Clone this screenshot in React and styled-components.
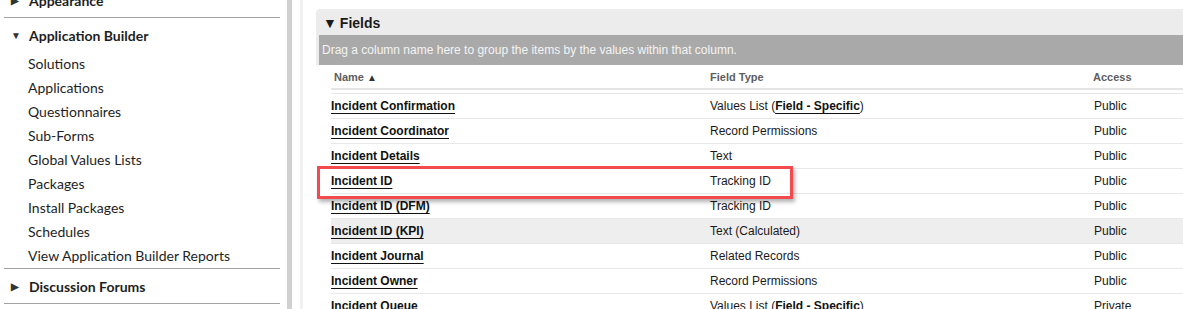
import React from "react";
import styled, { createGlobalStyle } from "styled-components";

const GlobalStyle = createGlobalStyle`
  html, body {
    margin: 0;
    padding: 0;
    background: #fff;
    overflow: hidden;
  }
  body {
    font-family: "Liberation Sans", Arial, sans-serif;
  }
`;

const menuItems = [
  "Solutions",
  "Applications",
  "Questionnaires",
  "Sub-Forms",
  "Global Values Lists",
  "Packages",
  "Install Packages",
  "Schedules",
  "View Application Builder Reports",
];

const rows = [
  { name: "Incident Confirmation", type: "Values List", typeLink: "Field - Specific", access: "Public" },
  { name: "Incident Coordinator", type: "Record Permissions", access: "Public" },
  { name: "Incident Details", type: "Text", access: "Public" },
  { name: "Incident ID", type: "Tracking ID", access: "Public", marked: true },
  { name: "Incident ID (DFM)", type: "Tracking ID", access: "Public" },
  { name: "Incident ID (KPI)", type: "Text (Calculated)", access: "Public", hover: true },
  { name: "Incident Journal", type: "Related Records", access: "Public" },
  { name: "Incident Owner", type: "Record Permissions", access: "Public" },
  { name: "Incident Queue", type: "Values List", typeLink: "Field - Specific", access: "Private" },
];

const App = () => {
  return (
    <>
      <GlobalStyle />
      <Page>
        <Sidebar>
          <Section>
            <SectionHead>
              <Caret>▶</Caret>Appearance
            </SectionHead>
          </Section>
          <Section>
            <SectionHead>
              <Caret>▼</Caret>Application Builder
            </SectionHead>
            <MenuList>
              {menuItems.map((item) => (
                <MenuItem key={item}>{item}</MenuItem>
              ))}
            </MenuList>
          </Section>
          <Section>
            <SectionHead>
              <Caret>▶</Caret>Discussion Forums
            </SectionHead>
          </Section>
        </Sidebar>
        <Splitter />
        <Main>
          <Panel>
            <PanelHead>
              <PanelCaret>▼</PanelCaret>Fields
            </PanelHead>
            <PanelBody>
              <GroupBar>
                Drag a column name here to group the items by the values within that column.
              </GroupBar>
              <Table>
                <HeadRow>
                  <HeadCell $pad>
                    Name <SortArrow>▲</SortArrow>
                  </HeadCell>
                  <HeadCell>Field Type</HeadCell>
                  <HeadCell>Access</HeadCell>
                </HeadRow>
                <Body>
                  {rows.map((r) => (
                    <Row key={r.name} $hover={r.hover}>
                      <Cell>
                        <NameLink>{r.name}</NameLink>
                      </Cell>
                      <Cell>
                        {r.type}
                        {r.typeLink && (
                          <>
                            {" ("}
                            <TypeLink>{r.typeLink}</TypeLink>)
                          </>
                        )}
                      </Cell>
                      <Cell $access>{r.access}</Cell>
                      {r.marked && <Marker />}
                    </Row>
                  ))}
                </Body>
              </Table>
            </PanelBody>
          </Panel>
        </Main>
      </Page>
    </>
  );
};

export default App;

const Page = styled.div`
  display: flex;
  width: 1183px;
  height: 309px;
  overflow: hidden;
`;

const Sidebar = styled.nav`
  width: 276px;
  margin: -17px 7px 0 4px;
  font-family: Lato, "Noto Sans", sans-serif;
  font-size: 14px;
  color: #1e1e1e;
  flex-shrink: 0;
`;

const Section = styled.div`
  border-bottom: 1px solid #a2a2a2;
`;

const SectionHead = styled.div`
  display: flex;
  align-items: center;
  height: 34px;
  font-weight: 700;
`;

const Caret = styled.span`
  width: 25px;
  padding-left: 7px;
  box-sizing: border-box;
  font-size: 10px;
  color: #333;
`;

const MenuList = styled.ul`
  list-style: none;
  margin: 0 0 0 24px;
  padding: 0;
`;

const MenuItem = styled.li`
  height: 24px;
  line-height: 24px;
`;

const Splitter = styled.div`
  width: 5px;
  background: #d1d1d1;
  flex-shrink: 0;
`;

const Main = styled.main`
  flex: 1;
  margin-left: 8px;
  border-left: 3px solid #f1f1f1;
  padding: 9px 0 0 13px;
  min-width: 0;
`;

const Panel = styled.section`
  border-radius: 4px 0 0 0;
  overflow: hidden;
`;

const PanelHead = styled.div`
  display: flex;
  align-items: center;
  height: 26px;
  padding: 2px 0 0 7px;
  box-sizing: border-box;
  background: #ececec;
  font-size: 14px;
  font-weight: 700;
  color: #1a1a1a;
`;

const PanelCaret = styled.span`
  font-size: 14px;
  margin-right: 3px;
`;

const PanelBody = styled.div`
  padding-left: 3px;
  background: linear-gradient(#ececec, #ececec) left top / 3px 30px no-repeat;
`;

const GroupBar = styled.div`
  height: 30px;
  line-height: 30px;
  padding-left: 3px;
  background: #a9a9a9;
  color: #f4f4f4;
  font-size: 12px;
  white-space: nowrap;
`;

const Table = styled.div`
  margin-left: 12px;
  font-size: 12px;
  color: #1a1a1a;
`;

const grid = `
  display: grid;
  grid-template-columns: 379px 383px 1fr;
`;

const HeadRow = styled.div`
  ${grid};
  height: 23px;
  align-items: center;
  border-bottom: 2px solid #e4e4e4;
  margin-bottom: 3px;
`;

const HeadCell = styled.div`
  font-size: 11px;
  font-weight: 700;
  color: #5e5e5e;
  padding-left: ${({ $pad }) => ($pad ? "3px" : "0")};
  white-space: nowrap;
`;

const SortArrow = styled.span`
  font-size: 10px;
  color: #333;
`;

const Body = styled.div`
  border-top: 1px solid #e8e8e8;
`;

const Row = styled.div`
  ${grid};
  position: relative;
  height: 24px;
  align-items: center;
  border-bottom: 1px solid #e8e8e8;
  background: ${({ $hover }) => ($hover ? "#eeeeee" : "#fff")};
`;

const Cell = styled.div`
  white-space: nowrap;
  padding-left: ${({ $access }) => ($access ? "1px" : "0")};
`;

const NameLink = styled.span`
  font-weight: 700;
  color: #111;
  text-decoration: underline;
  text-underline-offset: 3px;
`;

const TypeLink = styled.span`
  font-weight: 700;
  color: #111;
  text-decoration: underline;
  text-underline-offset: 3px;
`;

const Marker = styled.div`
  position: absolute;
  left: -14px;
  top: -3px;
  width: 476px;
  height: 33px;
  box-sizing: border-box;
  border: 3px solid #f24a4d;
  box-shadow: 2px 3px 4px rgba(0, 0, 0, 0.3);
  pointer-events: none;
  z-index: 2;
`;
